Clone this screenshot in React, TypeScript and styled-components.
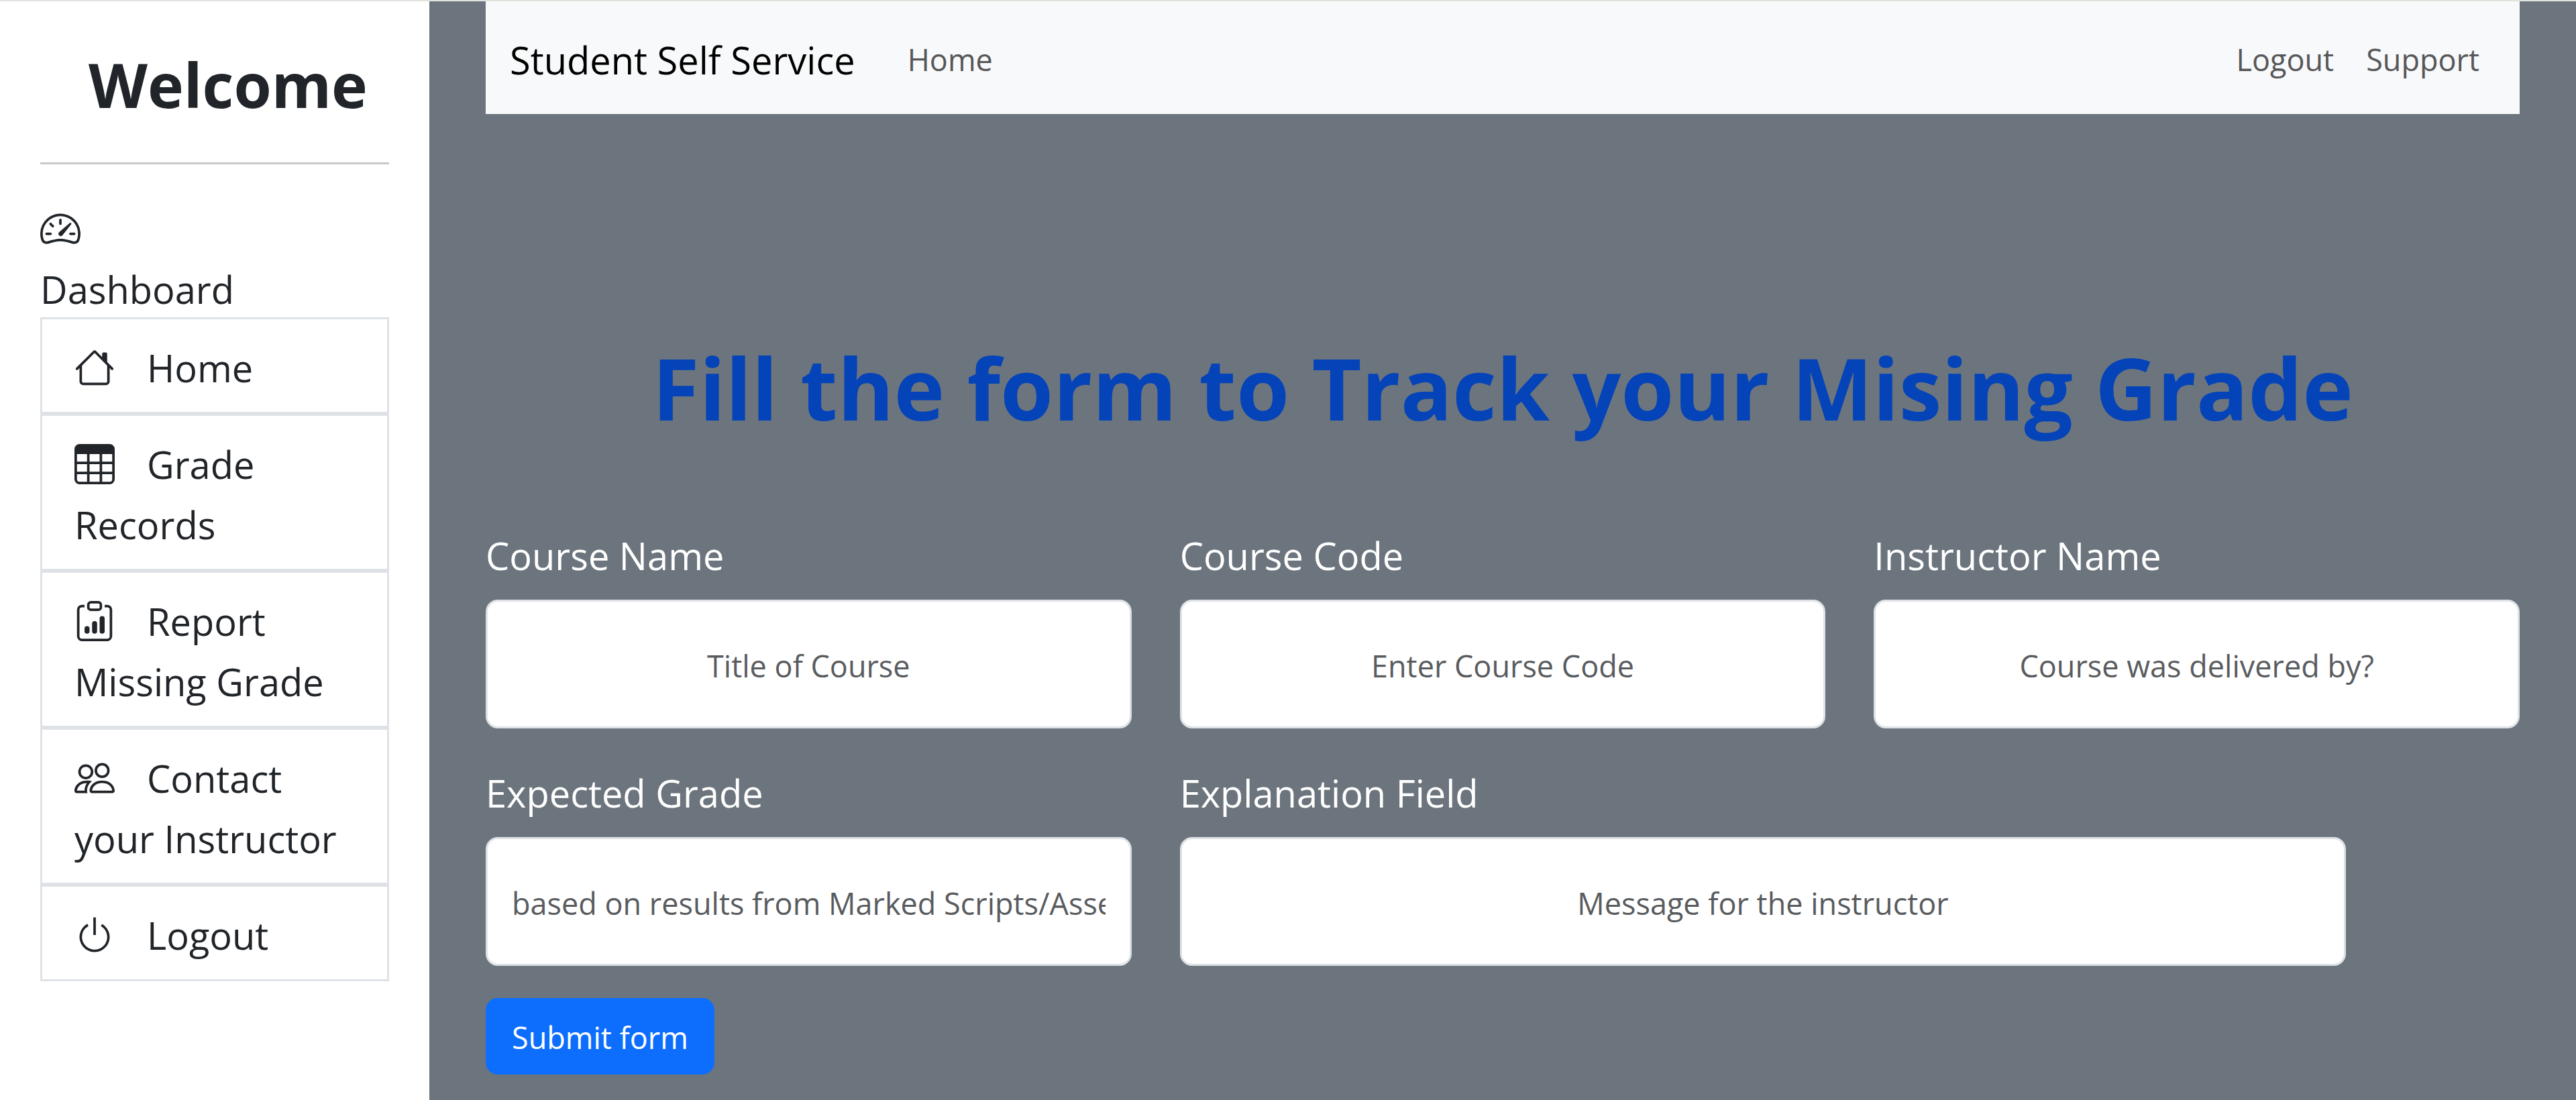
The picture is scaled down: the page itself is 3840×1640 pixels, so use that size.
import React from "react";
import styled, { createGlobalStyle } from "styled-components";
import { BsSpeedometer2, BsTable, BsClipboardData, BsPeople, BsPower } from "react-icons/bs";

const GlobalStyle = createGlobalStyle`
  *, *::before, *::after { box-sizing: border-box; }
  body {
    margin: 0;
    background: #fff;
    color: #212529;
    font-family: "Open Sans", "Noto Sans", sans-serif;
    font-size: 45px;
    line-height: 72px;
  }
`;

const Page = styled.div`
  display: flex;
  min-height: 100vh;
  border-top: 2px solid #e1e4de;
`;

const Sidebar = styled.aside`
  flex: 0 0 640px;
  padding: 60px;
  font-size: 56px;
  line-height: 90px;
`;

const Welcome = styled.h2`
  margin: 0;
  padding: 0 0 3px 40px;
  font-size: 91px;
  font-weight: 700;
  line-height: 129px;
  text-align: center;
`;

const Divider = styled.hr`
  height: 3px;
  margin: 48px 0;
  border: 0;
  background: #c7c8ca;
`;

const Dashboard = styled.div`
  padding-top: 3px;
  margin-bottom: -3px;

  svg { display: inline-block; vertical-align: -8px; font-size: 60px; }
  span { display: block; }
`;

const Menu = styled.ul`
  margin: 0;
  padding: 0;
  list-style: none;
`;

const MenuItem = styled.li`
  padding: 27px 48px 21px;
  border: 3px solid #dee2e6;
`;

const MenuLink = styled.a`
  color: inherit;
  text-decoration: none;

  svg { margin-right: 48px; vertical-align: -8px; font-size: 60px; }
`;

const Main = styled.main`
  flex: 1;
  min-width: 0;
  padding: 0 84px 36px;
  background: #6c757d;
`;

const Navbar = styled.nav`
  display: flex;
  align-items: center;
  padding: 24px 36px;
  background: #f8f9fa;
`;

const Brand = styled.a`
  padding: 18px 0 12px;
  margin-right: 54px;
  color: #000;
  font-size: 56px;
  line-height: 90px;
  text-decoration: none;
`;

const NavLink = styled.a<{ $end?: boolean }>`
  padding: 27px 24px 21px;
  margin-left: ${(p) => (p.$end ? "auto" : "0")};
  color: #575758;
  text-decoration: none;
`;

const Title = styled.h1`
  margin: 308px 0 102px;
  color: #0543b8;
  font-size: 128px;
  font-weight: 700;
  line-height: 200px;
  text-align: center;
`;

const Form = styled.form`
  display: grid;
  grid-template-columns: repeat(12, minmax(0, 1fr));
  gap: 48px 72px;
`;

const Field = styled.div<{ $span: number }>`
  grid-column: span ${(p) => p.$span};
`;

const Label = styled.label`
  display: block;
  padding: 3px 0 21px;
  color: #fff;
  font-size: 56px;
  line-height: 90px;
`;

const TextInput = styled.input`
  display: block;
  width: 100%;
  height: 192px;
  padding: 4px 36px 0;
  border: 3px solid #dee2e6;
  border-radius: 18px;
  background: #fff;
  color: #212529;
  font: inherit;
  text-align: center;

  &::placeholder { color: #595c5f; opacity: 1; }
`;

const Submit = styled.button`
  grid-column: 1 / -1;
  justify-self: start;
  padding: 20px 36px 16px;
  border: 3px solid #0d6efd;
  border-radius: 18px;
  background: #0d6efd;
  color: #fff;
  font: inherit;
`;

const HouseIcon = () => (
  <svg width="1em" height="1em" viewBox="0 0 16 16" fill="currentColor" aria-hidden="true">
    <path fillRule="evenodd" d="M2 13.5V7h1v6.5a.5.5 0 0 0 .5.5h9a.5.5 0 0 0 .5-.5V7h1v6.5a1.5 1.5 0 0 1-1.5 1.5h-9A1.5 1.5 0 0 1 2 13.5zm11-11V6l-2-2V2.5a.5.5 0 0 1 .5-.5h1a.5.5 0 0 1 .5.5z" />
    <path fillRule="evenodd" d="M7.293 1.5a1 1 0 0 1 1.414 0l6.647 6.646a.5.5 0 0 1-.708.708L8 2.207 1.354 8.854a.5.5 0 1 1-.708-.708L7.293 1.5z" />
  </svg>
);

const menu = [
  { icon: HouseIcon, label: "Home" },
  { icon: BsTable, label: "Grade Records" },
  { icon: BsClipboardData, label: "Report Missing Grade" },
  { icon: BsPeople, label: "Contact your Instructor" },
  { icon: BsPower, label: "Logout" },
];

const fields = [
  { id: "courseName", label: "Course Name", hint: "Title of Course", span: 4 },
  { id: "courseCode", label: "Course Code", hint: "Enter Course Code", span: 4 },
  { id: "instructorName", label: "Instructor Name", hint: "Course was delivered by?", span: 4 },
  { id: "expectedGrade", label: "Expected Grade", hint: "based on results from Marked Scripts/Assessments", span: 4 },
  { id: "explanation", label: "Explanation Field", hint: "Message for the instructor", span: 7 },
];

export default function App() {
  return (
    <>
      <GlobalStyle />
      <Page>
        <Sidebar>
          <Welcome>Welcome</Welcome>
          <Divider />
          <Dashboard>
            <BsSpeedometer2 />
            <span>Dashboard</span>
          </Dashboard>
          <Menu>
            {menu.map(({ icon: Icon, label }) => (
              <MenuItem key={label}>
                <MenuLink href="#"><Icon />{label}</MenuLink>
              </MenuItem>
            ))}
          </Menu>
        </Sidebar>
        <Main>
          <Navbar>
            <Brand href="#">Student Self Service</Brand>
            <NavLink href="#">Home</NavLink>
            <NavLink href="#" $end>Logout</NavLink>
            <NavLink href="#">Support</NavLink>
          </Navbar>
          <Title>Fill the form to Track your Mising Grade</Title>
          <Form onSubmit={(e: React.FormEvent) => e.preventDefault()}>
            {fields.map((f) => (
              <Field key={f.id} $span={f.span}>
                <Label htmlFor={f.id}>{f.label}</Label>
                <TextInput id={f.id} type="text" placeholder={f.hint} />
              </Field>
            ))}
            <Submit type="submit">Submit form</Submit>
          </Form>
        </Main>
      </Page>
    </>
  );
}
